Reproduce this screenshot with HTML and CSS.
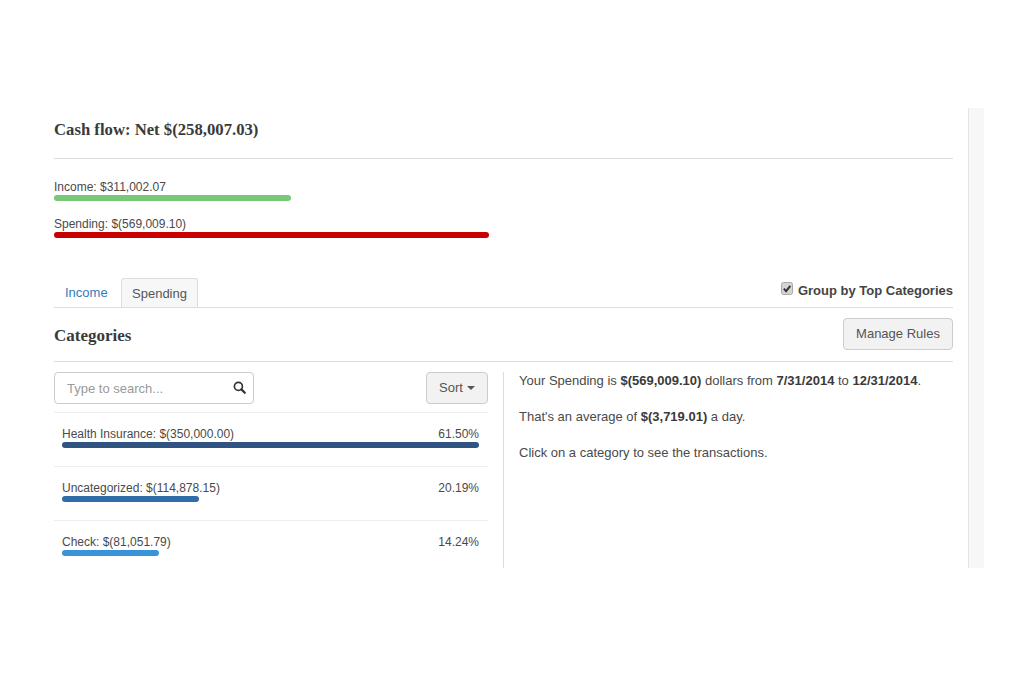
FILE: index.html
```html
<!DOCTYPE html>
<html lang="en">
<head>
<meta charset="utf-8">
<title>Cash flow</title>
<link rel="stylesheet" href="styles.css">
</head>
<body>
<div class="frame">
  <main class="main">
    <h2 class="title">Cash flow: Net $(258,007.03)</h2>
    <section class="summary">
      <div class="meter">
        <div class="meter-label">Income: $311,002.07</div>
        <div class="bar bar-income"></div>
      </div>
      <div class="meter">
        <div class="meter-label">Spending: $(569,009.10)</div>
        <div class="bar bar-spending"></div>
      </div>
    </section>
    <div class="tabbar">
      <a class="tab tab-link">Income</a>
      <a class="tab tab-active">Spending</a>
      <label class="group-toggle">
        <svg class="check" width="12" height="13" viewBox="0 0 12 13"><rect x="0.5" y="0.5" width="11" height="12" rx="2" fill="#d4d4d4" stroke="#a8a8a8"/><path d="M2.8 6.6l2.3 2.5 4.2-5.2" fill="none" stroke="#333" stroke-width="2"/></svg>
        Group by Top Categories
      </label>
    </div>
    <div class="cat-head">
      <h3 class="cat-title">Categories</h3>
      <button class="btn btn-manage">Manage Rules</button>
    </div>
    <div class="columns">
      <div class="left">
        <div class="tools">
          <div class="search">
            <span class="placeholder">Type to search...</span>
            <svg class="search-icon" width="13" height="13" viewBox="0 0 13 13"><circle cx="5.4" cy="5.4" r="4" fill="none" stroke="#333" stroke-width="1.7"/><path d="M8.4 8.4l3.4 3.4" stroke="#333" stroke-width="2.2" stroke-linecap="round"/></svg>
          </div>
          <button class="btn btn-sort">Sort<span class="caret"></span></button>
        </div>
        <div class="row">
          <div class="row-text"><span>Health Insurance: $(350,000.00)</span><span>61.50%</span></div>
          <div class="bar" style="width:417px;background:#2f5482"></div>
        </div>
        <div class="row">
          <div class="row-text"><span>Uncategorized: $(114,878.15)</span><span>20.19%</span></div>
          <div class="bar" style="width:137px;background:#2f6ca8"></div>
        </div>
        <div class="row">
          <div class="row-text"><span>Check: $(81,051.79)</span><span>14.24%</span></div>
          <div class="bar" style="width:97px;background:#3a93d8"></div>
        </div>
      </div>
      <div class="right">
        <p>Your Spending is <b>$(569,009.10)</b> dollars from <b>7/31/2014</b> to <b>12/31/2014</b>.</p>
        <p>That's an average of <b>$(3,719.01)</b> a day.</p>
        <p>Click on a category to see the transactions.</p>
      </div>
    </div>
  </main>
  <aside class="side"></aside>
</div>
</body>
</html>
```
FILE: styles.css
```css
html, body { margin: 0; padding: 0; background: #fff; }
body {
  font-family: "Liberation Sans", Arial, sans-serif;
  font-size: 12px;
  color: #4a4a4a;
  height: 675px;
  overflow: hidden;
}
.frame {
  display: flex;
  width: 984px;
  height: 460px;
  margin-top: 108px;
  overflow: hidden;
}
.main {
  width: 899px;
  margin-left: 54px;
  flex: none;
}
.side {
  width: 15px;
  margin-left: 15px;
  flex: none;
  background: #f5f7f9;
  border-left: 1px solid #e2e4e6;
}
.title {
  margin: 0;
  height: 51px;
  box-sizing: border-box;
  padding-top: 12px;
  border-bottom: 1px solid #ddd;
  font: bold 16.7px/19px "Liberation Serif", serif;
  color: #3a3a3a;
}
.summary { padding-top: 20px; height: 119px; box-sizing: border-box; }
.meter { margin-bottom: 15px; height: 22px; }
.meter-label { line-height: 16px; height: 16px; }
.bar { height: 6px; border-radius: 3px; }
.bar-income { width: 237px; background: #78c878; }
.bar-spending { width: 435px; background: #c80000; }
.tabbar {
  display: flex;
  align-items: flex-end;
  height: 30px;
  box-sizing: border-box;
  border-bottom: 1px solid #ddd;
}
.tab {
  display: block;
  height: 29px;
  box-sizing: border-box;
  line-height: 30px;
  font-size: 13px;
}
.tab-link { color: #337ab7; padding-left: 11px; width: 67px; }
.tab-active {
  width: 77px;
  text-align: center;
  color: #555;
  background: #f5f7f9;
  border: 1px solid #ddd;
  border-bottom: 0;
  border-radius: 3px 3px 0 0;
}
.group-toggle {
  display: flex;
  align-items: center;
  margin-left: auto;
  align-self: flex-start;
  font-weight: bold;
  font-size: 13px;
  line-height: 16px;
  color: #444;
  margin-top: 4px;
}
.check { margin: 0 5px 5px 0; flex: none; }
.cat-head {
  display: flex;
  justify-content: space-between;
  align-items: flex-start;
  height: 54px;
  box-sizing: border-box;
  padding-top: 10px;
  border-bottom: 1px solid #ddd;
}
.cat-title {
  margin: 0;
  font: bold 17px/19px "Liberation Serif", serif;
  padding-top: 8px;
  color: #3a3a3a;
}
.btn {
  font-family: inherit;
  font-size: 13px;
  color: #555;
  background: #f2f2f2;
  border: 1px solid #ccc;
  border-radius: 4px;
  height: 32px;
  padding: 0 0 2px;
}
.btn-manage { width: 110px; }
.columns { display: flex; padding-top: 10px; }
.left { width: 434px; flex: none; }
.tools { display: flex; justify-content: space-between; height: 40px; border-bottom: 1px solid #eee; }
.search {
  display: flex;
  align-items: center;
  justify-content: space-between;
  width: 200px;
  height: 32px;
  box-sizing: border-box;
  padding: 0 7px 0 12px;
  border: 1px solid #ccc;
  border-radius: 4px;
}
.placeholder { color: #999; font-size: 13px; }
.search-icon { margin-top: -2px; }
.btn-sort { width: 62px; }
.caret {
  display: inline-block;
  margin-left: 4px;
  vertical-align: middle;
  border-top: 4px solid #555;
  border-left: 4px solid transparent;
  border-right: 4px solid transparent;
}
.row {
  height: 54px;
  box-sizing: border-box;
  padding: 13px 9px 0 8px;
  border-bottom: 1px solid #eee;
}
.row-text { display: flex; justify-content: space-between; line-height: 16px; height: 16px; }
.right {
  margin-left: 15px;
  padding-left: 15px;
  border-left: 1px solid #ddd;
  width: 434px;
  height: 196px;
  box-sizing: border-box;
}
.right p { margin: 0 0 18px; line-height: 18px; font-size: 13px; }
.right b { color: #3a3a3a; }
```
